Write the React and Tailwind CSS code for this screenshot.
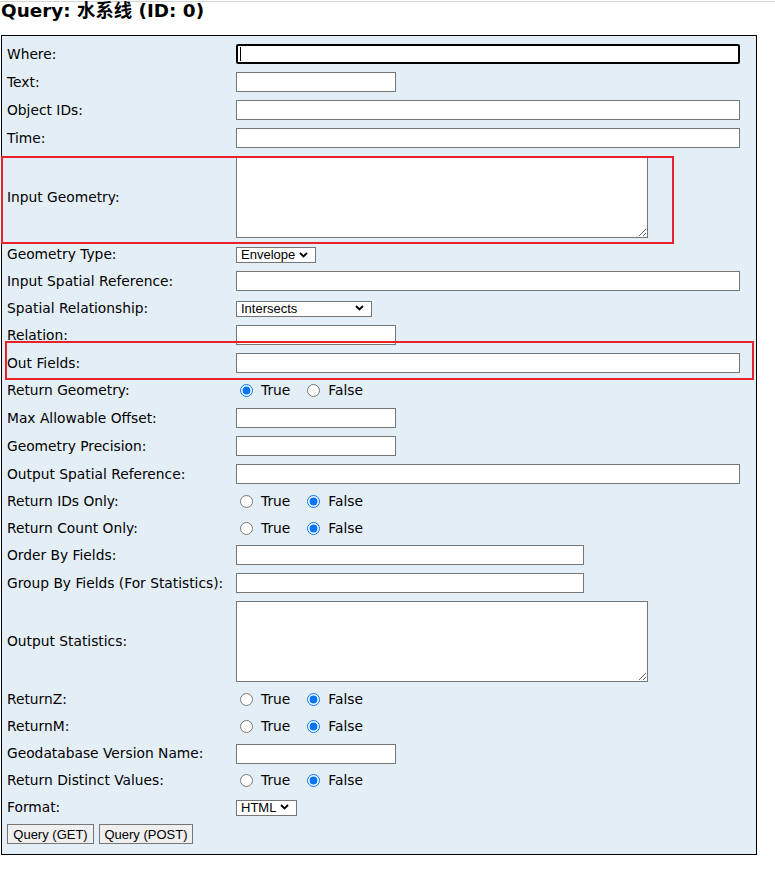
import React from "react";

const Chevron = () => (
  <svg className="absolute right-[8px] top-1/2 -translate-y-1/2 pointer-events-none" width="9" height="6" viewBox="0 0 9 6">
    <path d="M1 1 L4.5 4.5 L8 1" fill="none" stroke="#000" strokeWidth="1.8" />
  </svg>
);

const Select = ({ value, w }) => (
  <div className={"relative " + w}>
    <select
      defaultValue={value}
      className="appearance-none w-full h-[16px] border border-[#767676] bg-white pl-[4px] pr-[16px] text-[13px] leading-[14px] text-black font-['Liberation_Sans',sans-serif]"
    >
      <option>{value}</option>
    </select>
    <Chevron />
  </div>
);

const Radio = ({ checked, name }) => (
  <div className="flex items-center pl-[4px]">
    <input type="radio" name={name} defaultChecked={checked} className="w-[13px] h-[13px] m-0" />
    <span className="ml-[8px]">True</span>
    <input type="radio" name={name} defaultChecked={!checked} className="w-[13px] h-[13px] m-0 ml-[17px]" />
    <span className="ml-[8px]">False</span>
  </div>
);

const TextInput = ({ w }) => (
  <input type="text" className={"h-[20px] border border-[#767676] bg-white " + w} />
);

const TextArea = () => (
  <textarea className="block w-[412px] h-[81px] border border-[#767676] bg-white" />
);

const Row = ({ label, h, children }) => (
  <div className={"flex items-center " + h}>
    <div className="w-[229px] shrink-0">{label}</div>
    <div className="flex items-center">{children}</div>
  </div>
);

export default function App() {
  return (
    <div className="relative min-h-[873px] bg-white text-black font-['DejaVu_Sans','Noto_Sans_CJK_SC',sans-serif]">
      <div className="mt-[1px] border-t border-[#d4d4d4]" />
      <h2 className="text-[18.4px] leading-[18px] font-bold pl-[1px] m-0">Query: 水系线 (ID: 0)</h2>
      <div className="mt-[15px] ml-[1px] w-[756px] h-[820px] border border-black bg-[#e4eef7] pl-[5px] pt-[4px] text-[13.8px]">
        <Row label="Where:" h="h-[28px]">
          <div className="relative">
            <input type="text" className="block w-[504px] h-[20px] border-2 border-black rounded-[2px] bg-white" />
            <div className="absolute left-[4px] top-[3px] w-[1px] h-[14px] bg-black" />
          </div>
        </Row>
        <Row label="Text:" h="h-[28px]"><TextInput w="w-[160px]" /></Row>
        <Row label="Object IDs:" h="h-[28px]"><TextInput w="w-[504px]" /></Row>
        <Row label="Time:" h="h-[28px]"><TextInput w="w-[504px]" /></Row>
        <Row label="Input Geometry:" h="h-[90px]"><TextArea /></Row>
        <Row label="Geometry Type:" h="h-[25px]"><Select value="Envelope" w="w-[80px]" /></Row>
        <Row label="Input Spatial Reference:" h="h-[28px]"><TextInput w="w-[504px]" /></Row>
        <Row label="Spatial Relationship:" h="h-[26px]"><Select value="Intersects" w="w-[136px]" /></Row>
        <Row label="Relation:" h="h-[28px]"><TextInput w="w-[160px]" /></Row>
        <Row label="Out Fields:" h="h-[28px]"><TextInput w="w-[504px]" /></Row>
        <Row label="Return Geometry:" h="h-[27px]"><Radio name="rg" checked={true} /></Row>
        <Row label="Max Allowable Offset:" h="h-[28px]"><TextInput w="w-[160px]" /></Row>
        <Row label="Geometry Precision:" h="h-[28px]"><TextInput w="w-[160px]" /></Row>
        <Row label="Output Spatial Reference:" h="h-[28px]"><TextInput w="w-[504px]" /></Row>
        <Row label="Return IDs Only:" h="h-[27px]"><Radio name="rid" checked={false} /></Row>
        <Row label="Return Count Only:" h="h-[26px]"><Radio name="rc" checked={false} /></Row>
        <Row label="Order By Fields:" h="h-[28px]"><TextInput w="w-[348px]" /></Row>
        <Row label="Group By Fields (For Statistics):" h="h-[28px]"><TextInput w="w-[348px]" /></Row>
        <Row label="Output Statistics:" h="h-[89px]"><TextArea /></Row>
        <Row label="ReturnZ:" h="h-[27px]"><Radio name="rz" checked={false} /></Row>
        <Row label="ReturnM:" h="h-[27px]"><Radio name="rm" checked={false} /></Row>
        <Row label="Geodatabase Version Name:" h="h-[27px]"><TextInput w="w-[160px]" /></Row>
        <Row label="Return Distinct Values:" h="h-[27px]"><Radio name="rd" checked={false} /></Row>
        <Row label="Format:" h="h-[26px]"><Select value="HTML" w="w-[61px]" /></Row>
        <div className="flex items-center h-[27px] gap-[5px] font-['Liberation_Sans',sans-serif] text-[13px]">
          <button className="h-[20px] w-[87px] border border-[#767676] bg-[#efefef] text-[13px]">Query (GET)</button>
          <button className="h-[20px] w-[94px] border border-[#767676] bg-[#efefef] text-[13px]">Query (POST)</button>
        </div>
      </div>
      <div className="absolute left-[1px] top-[155px] w-[673px] h-[88px] border-2 border-[#e8212b] pointer-events-none" />
      <div className="absolute left-[5px] top-[340px] w-[749px] h-[39px] border-2 border-[#e8212b] pointer-events-none" />
    </div>
  );
}
